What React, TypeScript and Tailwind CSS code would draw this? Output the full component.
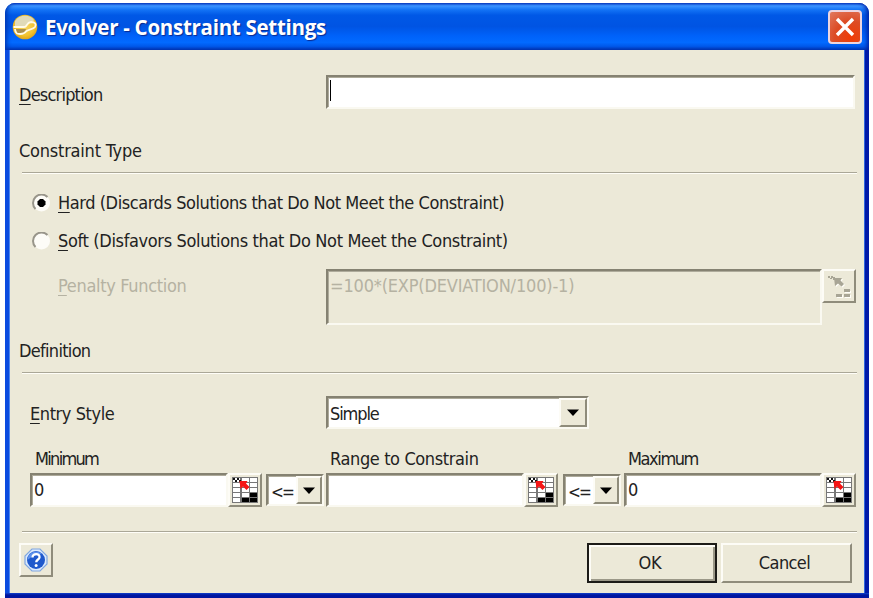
import type { ReactNode } from "react";
import clsx from "clsx";

const raised =
  "bg-[#ece9d8] border-2 border-t-[#fdfcf6] border-l-[#fdfcf6] border-r-[#8f8c7b] border-b-[#8f8c7b]";
const sunken =
  "border-2 border-t-[#858272] border-l-[#858272] border-r-[#faf9f1] border-b-[#faf9f1] shadow-[inset_1px_1px_0_#aeab9b]";

function AppIcon() {
  return (
    <svg width="27" height="27" viewBox="0 0 27 27">
      <defs>
        <radialGradient id="ball" cx="0.5" cy="0.45" r="0.6">
          <stop offset="0" stopColor="#f6d768" />
          <stop offset="0.65" stopColor="#f2c32e" />
          <stop offset="1" stopColor="#d99c14" />
        </radialGradient>
      </defs>
      <circle cx="13" cy="13" r="12.3" fill="url(#ball)" />
      <path d="M3 7C7 0.500 18 0 22 6C21 8 17 7 14.500 11L12 12H3Z" fill="#e0dab8" />
      <path d="M4 15H14L12.500 19H5Z" fill="#a98f4d" />
      <path d="M1.500 13H12C15.500 13 14 8.500 19 8C23.500 8 24.500 10.500 23 13C21 15.500 17 15 14.500 17C12.500 19.500 8.500 20.500 5 19.500C3.500 18.500 3 17 3 15" fill="none" stroke="#fffbe8" strokeWidth="1.800" />
    </svg>
  );
}

function RangeIcon() {
  return (
    <svg width="26" height="26" viewBox="0 0 26 26">
      <g shapeRendering="crispEdges">
        <rect x="0" y="0" width="26" height="26" fill="#777" />
        {[0, 1, 2, 3, 4].map((row) =>
          [0, 1, 2].map((col) => {
            const black = (row === 3 && col === 2) || (row === 4 && col > 0);
            return (
              <rect
                key={`${row}-${col}`}
                x={1 + col * 8.500}
                y={1 + row * 5}
                width="7"
                height="4"
                fill={black ? "#000" : "#fff"}
              />
            );
          })
        )}
        <path d="M1 1h2v2h-2zM5 1h2v2h-2zM3 3h2v2h-2zM7 3h2v2h-2z" fill="#111" />
      </g>
      <path d="M7.500 4H15.500L14 6.500L17.500 10L14.500 13L11 9.500L8.500 12Z" fill="#f51616" />
    </svg>
  );
}

function DisabledRangeIcon() {
  const arrow = "M8 5H16L14.500 7.500L18 11L15.500 13.500L12 10.500L9 13Z";
  return (
    <svg width="26" height="26" viewBox="0 0 26 26">
      <g fill="#fffef8" transform="translate(1 1)">
        <path d={arrow} />
        <path d="M10 21h6v3h-6zM18 17h6v2h-6zM18 21h6v3h-6z" />
      </g>
      <g fill="#a8a595">
        <path d="M2 3h2v2h-2zM4 5h2v1h-2zM5 3h2v2h-2zM7 4h2v3h-2z" />
        <path d={arrow} />
        <path d="M10 21h6v3h-6zM18 16h6v3h-6zM18 21h6v3h-6z" />
      </g>
    </svg>
  );
}

function HelpIcon() {
  return (
    <svg width="24" height="24" viewBox="0 0 24 24">
      <path d="M8 1H16L23 8V16L16 23H8L1 16V8Z" fill="#dceafc" stroke="#7fa6e0" strokeWidth="1.200" />
      <circle cx="12" cy="12" r="9" fill="#1f59cc" />
      <path d="M3.500 12A8.500 8.500 0 0 1 18 6Q9 7 3.500 12Z" fill="#5d91ec" />
      <path d="M8.500 9.500C8.500 4.800 16 5.200 15.500 9.300C15.200 11.600 12.300 11.500 12.200 14.300" fill="none" stroke="#fff" strokeWidth="2.300" />
      <circle cx="12.100" cy="17.500" r="1.500" fill="#fff" />
    </svg>
  );
}

function Arrow() {
  return (
    <svg width="12" height="7" viewBox="0 0 12 7">
      <path d="M0 0.500H12L6 7Z" fill="#000" />
    </svg>
  );
}

function Key({ children }: { children: ReactNode }) {
  return <span className="underline decoration-1 underline-offset-[3px]">{children}</span>;
}

function Radio({ checked }: { checked?: boolean }) {
  return (
    <svg width="18" height="18" viewBox="0 0 18 18" className="mr-[8px] shrink-0">
      <circle cx="9.500" cy="9" r="8.500" fill="#fdfcf7" />
      <path d="M3.500 15A8 8 0 0 1 15.500 3" fill="none" stroke="#98958a" strokeWidth="2" />
      {checked && <path d="M8 5H11L13.500 7.500V10.500L11 13H8L5.500 10.500V7.500Z" fill="#000" />}
    </svg>
  );
}

function Divider() {
  return <div className="mr-[7px] ml-[12px] h-[2px] border-t border-t-[#aaa797] border-b border-b-[#fffef8]" />;
}

function RangeField({ value, className }: { value?: string; className?: string }) {
  return (
    <div className={clsx("flex items-start", className)}>
      <div className={clsx("h-[34px] flex-1 bg-white pl-[2px] leading-[29px]", sunken)}>{value}</div>
      <button className={clsx("flex h-[34px] w-[34px] items-center justify-center", raised)}>
        <RangeIcon />
      </button>
    </div>
  );
}

function Operator({ className }: { className?: string }) {
  return (
    <div className={clsx("mt-px flex h-[32px] w-[58px] bg-white", sunken, className)}>
      <span className="flex-1 pl-[3px] text-[17px] leading-[32px] tracking-[-1.800px]">&lt;=</span>
      <button className={clsx("flex h-[28px] w-[26px] items-center justify-center", raised)}>
        <Arrow />
      </button>
    </div>
  );
}

export default function App() {
  return (
    <div className="h-[598px] w-[873px] overflow-hidden bg-white pt-[3px] pl-[5px] font-['DejaVu_Sans_Condensed','DejaVu_Sans',sans-serif] text-[18px] whitespace-nowrap text-[#222] [font-stretch:condensed]">
      <div className="flex h-[595px] w-[864px] flex-col rounded-t-[10px] bg-linear-to-r from-[#0a4be0] from-50% to-[#0019a8] to-50%">
        <header className="flex h-[47px] shrink-0 items-center rounded-t-[10px] bg-[linear-gradient(#0a43c8_0%,#3c94ff_6%,#1474f6_14%,#0058e6_26%,#0054e3_50%,#0062fa_70%,#026aff_84%,#0058ea_92%,#0038b4_100%)] pt-px pr-[7px] pl-[7px] shadow-[inset_4px_0_4px_-2px_#0036b0,inset_-4px_0_4px_-2px_#001fa0]">
          <AppIcon />
          <h1 className="ml-[6px] flex-1 font-['Open_Sans',sans-serif] text-[20.500px] leading-[50px] font-bold tracking-[-0.280px] text-white [font-stretch:normal] [text-shadow:1px_1px_1px_#0a2a90]">
            Evolver - Constraint Settings
          </h1>
          <button className="flex h-[34px] w-[34px] items-center justify-center rounded-[4px] border-2 border-[#eed6e0] bg-[radial-gradient(circle_at_70%_85%,#f03c05,#dc4c25_50%,#e17a60)]">
            <svg width="20" height="20" viewBox="0 0 20 20">
              <path d="M2 2L18 18M18 2L2 18" stroke="#fff" strokeWidth="3.400" />
            </svg>
          </button>
        </header>

        <main className="mx-[5px] flex h-[543px] shrink-0 flex-col bg-[#ece9d8] shadow-[-1px_0_0_#4d86ee,1px_0_0_#2f66dd]">
          <div className="mt-[25px] flex h-[34px] pl-[9px]">
            <label className="w-[307px] leading-[39px] tracking-[-0.800px]">
              <Key>D</Key>escription
            </label>
            <div className={clsx("w-[529px] bg-white pt-[3px] pl-[2px]", sunken)}>
              <div className="h-[21px] w-px bg-black" />
            </div>
          </div>

          <h2 className="mt-[27px] h-[28px] pl-[9px] leading-[29px] tracking-[-0.220px]">Constraint Type</h2>
          <div className="mt-[8px]">
            <Divider />
          </div>

          <label className="mt-[10px] flex h-[38px] items-center pl-[22px] tracking-[-0.430px]">
            <Radio checked />
            <span className="pb-[2px]">
              <Key>H</Key>ard (Discards Solutions that Do Not Meet the Constraint)
            </span>
          </label>
          <label className="flex h-[38px] items-center pl-[22px] tracking-[-0.350px]">
            <Radio />
            <span className="pb-[2px]">
              <Key>S</Key>oft (Disfavors Solutions that Do Not Meet the Constraint)
            </span>
          </label>

          <div className="mt-[9px] flex h-[56px] pl-[48px] text-[#b5b2a2]">
            <label className="w-[268px] leading-[34px] tracking-[-0.320px]">
              <Key>P</Key>enalty Function
            </label>
            <div className={clsx("w-[496px] pl-[2px] leading-[29px] tracking-[-0.180px]", sunken)}>
              =100*(EXP(DEVIATION/100)-1)
            </div>
            <button className={clsx("flex h-[34px] w-[34px] items-center justify-center", raised)}>
              <DisabledRangeIcon />
            </button>
          </div>

          <h2 className="mt-[12px] h-[28px] pl-[9px] leading-[28px] tracking-[-0.700px]">Definition</h2>
          <div className="mt-[7px]">
            <Divider />
          </div>

          <div className="mt-[22px] flex h-[33px] pl-[20px]">
            <label className="w-[296px] leading-[35px] tracking-[-0.420px]">
              <Key>E</Key>ntry Style
            </label>
            <div className={clsx("flex w-[263px] bg-white pl-[2px] leading-[31px] tracking-[-1.100px]", sunken)}>
              <span className="flex-1">Simple</span>
              <button className={clsx("flex h-[29px] w-[28px] items-center justify-center", raised)}>
                <Arrow />
              </button>
            </div>
          </div>

          <div className="mt-[17px] flex h-[27px] pl-[25px] leading-[25px]">
            <span className="w-[295px] tracking-[-1.700px]">Minimum</span>
            <span className="w-[298px] tracking-[-0.380px]">Range to Constrain</span>
            <span className="tracking-[-1.400px]">Maximum</span>
          </div>
          <div className="flex h-[34px] pl-[20px]">
            <RangeField value="0" className="w-[232px]" />
            <Operator className="ml-[4px]" />
            <RangeField className="ml-[2px] w-[232px]" />
            <Operator className="ml-[5px]" />
            <RangeField value="0" className="ml-[3px] w-[232px]" />
          </div>

          <div className="mt-[24px]">
            <Divider />
          </div>

          <footer className="mt-[10px] flex items-start pl-[9px]">
            <button className={clsx("flex h-[34px] w-[34px] items-center justify-center", raised)}>
              <HelpIcon />
            </button>
            <button className="ml-[534px] h-[40px] w-[130px] border-2 border-[#1c1b17] bg-[#ece9d8] pr-[4px] pb-[2px] tracking-[-0.200px] shadow-[inset_2px_2px_0_#fdfcf6,inset_-2px_-2px_0_#9b9888]">
              OK
            </button>
            <button className={clsx("ml-[4px] h-[40px] w-[131px] pr-[4px] pb-[2px] tracking-[-0.600px]", raised)}>
              Cancel
            </button>
          </footer>
        </main>
        <div className="h-[5px] shrink-0 bg-linear-to-b from-[#1440cc] to-[#0015a0] to-40%" />
      </div>
    </div>
  );
}
